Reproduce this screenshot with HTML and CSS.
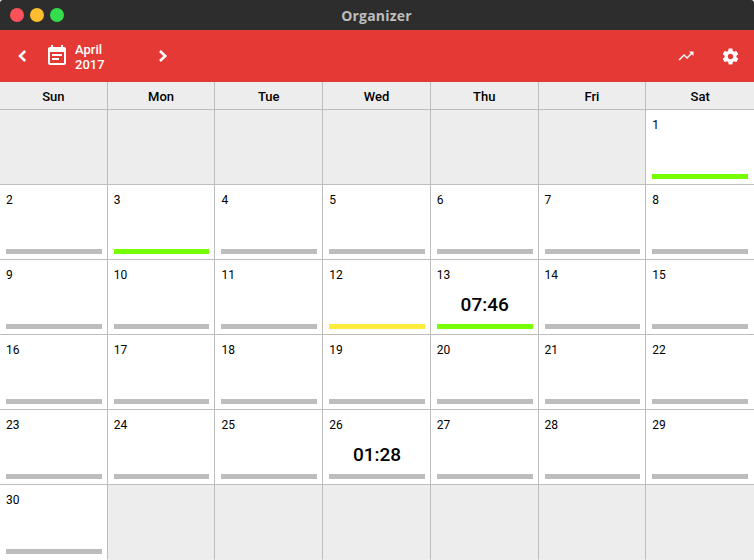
FILE: index.html
```html
<!DOCTYPE html>
<html lang="en">
<head>
    <meta charset="UTF-8">
    <meta name="viewport" content="width=device-width, initial-scale=1.0">
    <title>Organizer</title>
    <link rel="stylesheet" href="styles.css">
</head>
<body>
    <div class="window">
        <div class="titlebar">
            <div class="lights">
                <span class="light light-close"></span>
                <span class="light light-min"></span>
                <span class="light light-max"></span>
            </div>
            <div class="title">Organizer</div>
        </div>
        <div class="toolbar">
            <svg class="chevron chevron-prev" width="12" height="14" viewBox="0 0 12 14"><path d="M9.200 2 L4 7 L9.200 12" fill="none" stroke="#fff" stroke-width="2.6"/></svg>
            <svg class="cal-icon" width="24" height="24" viewBox="0 0 24 24"><path fill="#fff" d="M19 3h-1V1h-2v2H8V1H6v2H5c-1.1 0-2 .9-2 2v14c0 1.1.9 2 2 2h14c1.1 0 2-.9 2-2V5c0-1.100-.9-2-2-2zm0 16H5V8h14v11zM7 10h10v2H7zm0 4h7v2H7z"/></svg>
            <div class="month"><div>April</div><div>2017</div></div>
            <svg class="chevron chevron-next" width="12" height="14" viewBox="0 0 12 14"><path d="M3 2 L8.200 7 L3 12" fill="none" stroke="#fff" stroke-width="2.6"/></svg>
            <div class="toolbar-right">
                <svg width="18" height="18" viewBox="0 0 24 24"><path fill="#fff" d="M16 6l2.290 2.290-4.880 4.880-4-4L2 16.590 3.410 18l6-6 4 4 6.300-6.290L22 12V6z"/></svg>
                <svg class="gear" width="19" height="19" viewBox="0 0 24 24"><path fill="#fff" d="M19.430 12.980c.04-.32.070-.64.070-.98s-.03-.66-.07-.98l2.110-1.650c.19-.15.240-.42.120-.64l-2-3.460c-.12-.22-.39-.3-.61-.22l-2.490 1c-.52-.4-1.080-.73-1.690-.98l-.38-2.650C14.460 2.180 14.250 2 14 2h-4c-.25 0-.46.18-.49.420l-.38 2.650c-.61.25-1.170.59-1.690.98l-2.490-1c-.23-.09-.49 0-.61.22l-2 3.460c-.13.22-.07.49.12.64l2.110 1.650c-.04.32-.07.65-.07.98s.03.66.07.98l-2.110 1.650c-.19.15-.24.42-.12.64l2 3.460c.12.22.39.3.61.22l2.490-1c.52.4 1.080.73 1.690.98l.38 2.650c.03.24.24.42.49.42h4c.25 0 .46-.18.49-.42l.38-2.650c.61-.25 1.170-.59 1.690-.98l2.490 1c.23.09.49 0 .61-.22l2-3.460c.12-.22.07-.49-.12-.64l-2.110-1.650zM12 15.500c-1.930 0-3.500-1.570-3.500-3.500s1.570-3.500 3.500-3.500 3.500 1.570 3.500 3.500-1.570 3.500-3.500 3.500z"/></svg>
            </div>
        </div>
        <div class="weekdays">
            <div class="weekday">Sun</div>
            <div class="weekday">Mon</div>
            <div class="weekday">Tue</div>
            <div class="weekday">Wed</div>
            <div class="weekday">Thu</div>
            <div class="weekday">Fri</div>
            <div class="weekday">Sat</div>
        </div>
        <div class="days" id="days"></div>
    </div>

    <script>
        const marks = { 1: 'green', 3: 'green', 12: 'yellow', 13: 'green' };
        const times = { 13: '07:46', 26: '01:28' };
        const days = document.getElementById('days');

        for (let i = 0; i < 42; i++) {
            const day = i - 5;
            const cell = document.createElement('div');
            if (day < 1 || day > 30) {
                cell.className = 'day day-off';
            } else {
                cell.className = 'day';
                cell.innerHTML = '<div class="day-num">' + day + '</div>'
                    + '<div class="day-time">' + (times[day] || '') + '</div>'
                    + '<div class="day-bar ' + (marks[day] || '') + '"></div>';
            }
            days.appendChild(cell);
        }
    </script>
</body>
</html>
```

FILE: styles.css
```css
* {
    box-sizing: border-box;
}
body {
    margin: 0;
    font-family: Roboto, sans-serif;
    background-color: #fff;
}
.window {
    width: 754px;
    height: 560px;
    overflow: hidden;
}
.titlebar {
    height: 30px;
    background-color: #2d2d2d;
    border-radius: 3px 3px 0 0;
    display: flex;
    align-items: center;
    position: relative;
    justify-content: center;
}
.lights {
    position: absolute;
    left: 10px;
    top: 8px;
    display: flex;
    gap: 6px;
}
.light {
    width: 14px;
    height: 14px;
    border-radius: 50%;
}
.light-close {
    background-color: #f9525a;
}
.light-min {
    background-color: #fdbd2e;
}
.light-max {
    background-color: #33dd4b;
}
.title {
    color: #bdbdbd;
    font-family: "Open Sans", sans-serif;
    font-size: 14px;
    font-weight: 700;
    letter-spacing: 0.2px;
    margin-left: -1px;
}
.toolbar {
    height: 52px;
    background-color: #e53935;
    display: flex;
    align-items: center;
    color: #fff;
}
.chevron-prev {
    margin-left: 16px;
}
.cal-icon {
    margin-left: 17px;
}
.month {
    margin-left: 6px;
    padding-top: 2px;
    font-size: 13px;
    font-weight: 500;
    line-height: 15px;
}
.chevron-next {
    margin-left: 52px;
}
.toolbar-right {
    margin-left: auto;
    margin-right: 14px;
    display: flex;
    align-items: center;
    gap: 26px;
}
.weekdays {
    height: 28px;
    background-color: #ededed;
    border-bottom: 1px solid #bdbdbd;
    display: grid;
    grid-template-columns: repeat(7, 1fr);
}
.weekday {
    border-right: 1px solid #bdbdbd;
    font-size: 13px;
    font-weight: 500;
    color: #000;
    text-align: center;
    line-height: 29px;
}
.weekday:last-child {
    border-right: none;
}
.days {
    display: grid;
    grid-template-columns: repeat(7, 1fr);
    grid-auto-rows: 75px;
}
.day {
    border-right: 1px solid #bdbdbd;
    border-bottom: 1px solid #bdbdbd;
    padding: 0 5px 0 6px;
    display: flex;
    flex-direction: column;
    background-color: #fff;
}
.day:nth-child(7n) {
    border-right: none;
    padding-right: 6px;
}
.day:nth-last-child(-n+7) {
    border-bottom-color: transparent;
}
.day-off {
    background-color: #ededed;
}
.day-num {
    margin-top: 8px;
    font-size: 12px;
    line-height: 14px;
    color: #000;
}
.day-time {
    flex: 1;
    text-align: center;
    font-size: 19px;
    font-weight: 500;
    line-height: 24px;
    padding-top: 11px;
    color: #000;
}
.day-bar {
    height: 5px;
    margin-bottom: 5px;
    background-color: #bdbdbd;
}
.day-bar.green {
    background-color: #76ff03;
}
.day-bar.yellow {
    background-color: #ffeb3b;
}
```
